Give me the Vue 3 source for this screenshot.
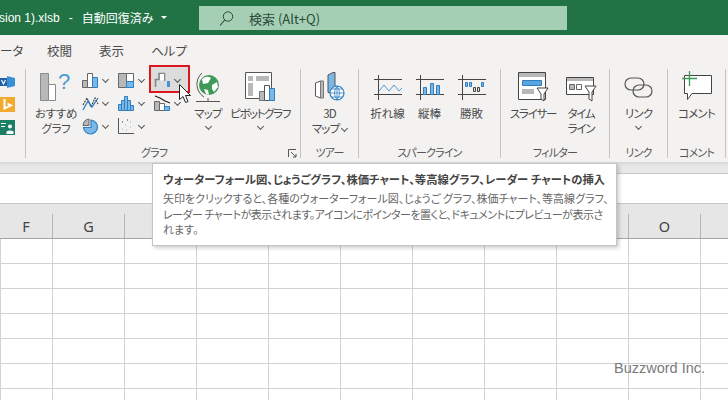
<script setup>
// only the letters that show past the tooltip get a name
const colNames = ['F', 'G', '', '', '', '', '', '', '', 'O', '']
const cols = colNames.map((name, i) => ({ id: i, name, width: i === 0 ? 53 : 72 }))
const rows = Array.from({ length: 7 }, (_, i) => i)

const tipLines = [
  '矢印をクリックすると、各種のウォーターフォール図、じょうご グラフ、株価チャート、等高線グラフ、',
  'レーダー チャートが表示されます。アイコンにポインターを置くと、ドキュメントにプレビューが表示さ',
  'れます。'
]
</script>

<template>
  <div class="app">
    <header class="title-bar">
      <div class="doc-title">sion 1).xlsb<span class="dash">-</span>自動回復済み<i class="caret"></i></div>
      <div class="search">
        <svg class="search-icon" width="15" height="15" viewBox="0 0 15 15">
          <circle cx="9" cy="5.500" r="4.700" fill="none" stroke="#2c4a38" stroke-width="1" />
          <path d="M5.700 9 1 14.500" stroke="#2c4a38" stroke-width="1.100" fill="none" />
        </svg>
        <span>検索 (Alt+Q)</span>
      </div>
    </header>

    <nav class="tabs">
      <span class="tab-cut">ータ</span>
      <span>校閲</span>
      <span>表示</span>
      <span>ヘルプ</span>
    </nav>

    <section class="ribbon">
      <div class="group g-cut">
        <div class="cut-icons">
          <svg width="15" height="14" viewBox="0 0 15 14"><path d="M0 3h8v8H0z" fill="#1e5fa8" /><path d="M7 1l8 2v8l-8 2z" fill="#3c8fd6" /><path d="M1.500 5l2 4 2-4" fill="none" stroke="#fff" stroke-width="1.200" /></svg>
          <svg width="15" height="15" viewBox="0 0 15 15"><path d="M0 0h15v15H0z" fill="#f2ab2e" /><path d="M4.500 2v9.500L11 8.500 7.500 6.500" fill="none" stroke="#fff" stroke-width="2" /></svg>
          <svg width="15" height="15" viewBox="0 0 15 15"><path d="M0 0h15v15H0z" fill="#1a7f64" /><circle cx="10" cy="6.500" r="2" fill="#fff" /><path d="M6.500 14v-2.500q3.500-2 7 0V14zM1 3h5v1H1zM1 6h4v1H1z" fill="#fff" /></svg>
        </div>
      </div>

      <div class="group g-chart">
        <div class="group-body chart-body">
          <div class="big-btn rec">
            <div class="ico">
              <svg width="32" height="29" viewBox="0 0 32 29">
                <path d="M.5 1.500h8v27h-8z" fill="#b8b8b8" stroke="#8a8a8a" />
                <path d="M8.500 12.500h7v16h-7z" fill="#fff" stroke="#8a8a8a" />
                <text x="18" y="17" font-size="22" fill="#4a9bd4" font-family="Liberation Sans">?</text>
              </svg>
            </div>
            <span>おすすめ<br />グラフ</span>
          </div>

          <div class="chart-grid">
            <div class="mini">
              <svg width="17" height="17" viewBox="0 0 17 17"><path d="M.5 8.500h5v7h-5z" fill="#b8b8b8" stroke="#666" /><path d="M5.500 1.500h5v14h-5z" fill="#fff" stroke="#666" /><path d="M10.500 5.500h5v10h-5z" fill="#7ab8e8" stroke="#2f7fc0" /></svg>
              <i class="chev"></i>
            </div>
            <div class="mini">
              <svg width="17" height="17" viewBox="0 0 17 17"><path d="M.5 1.500h8v14h-8z" fill="#b8b8b8" stroke="#666" /><path d="M8.500 1.500h7v8h-7z" fill="#fff" stroke="#666" /><path d="M8.500 9.500h7v6h-7z" fill="#7ab8e8" stroke="#2f7fc0" /></svg>
              <i class="chev"></i>
            </div>
            <div class="mini active">
              <svg width="17" height="17" viewBox="0 0 17 17"><path d="M1.500 15V7.500h3.500V1.500h5.500v7.500" fill="none" stroke="#888" stroke-width="1.600" /><path d="M6 2h4v6.500H6z" fill="#fff" /><path d="M13 9h3v6h-3z" fill="#3f92d6" /></svg>
              <i class="chev"></i>
            </div>
            <div class="mini">
              <svg width="17" height="17" viewBox="0 0 17 17"><path d="M1 10 5 3l4 9 4-9 3 6" fill="none" stroke="#333" stroke-width="1.100" stroke-dasharray="2 1" /><path d="M1 15 6 6l4 6 6-9" fill="none" stroke="#2f7fc0" stroke-width="1.300" /></svg>
              <i class="chev"></i>
            </div>
            <div class="mini">
              <svg width="17" height="17" viewBox="0 0 17 17"><path d="M.5 9.500h3v6h-3zM3.500 5.500h3v10h-3zM6.500 1.500h3v14h-3zM9.500 5.500h3v10h-3zM12.500 10.500h3v5h-3z" fill="#7ab8e8" stroke="#2f7fc0" /></svg>
              <i class="chev"></i>
            </div>
            <div class="mini">
              <svg width="17" height="17" viewBox="0 0 17 17"><path d="M.5 6.500h5v9h-5z" fill="#b8b8b8" stroke="#666" /><path d="M5.500 8.500h5v7h-5z" fill="#fff" stroke="#666" /><path d="M10.500 11.500h5v4h-5z" fill="#7ab8e8" stroke="#2f7fc0" /><path d="M1 1l5 2 5 3 5 2" fill="none" stroke="#222" stroke-width="1.300" /></svg>
              <i class="chev"></i>
            </div>
            <div class="mini">
              <svg width="17" height="17" viewBox="0 0 17 17"><path d="M7 1A7 7 0 0 0 1 7.500h6z" fill="#b8b8b8" stroke="#666" /><path d="M9 2a7 7 0 1 1-7.500 7.500H9z" fill="#7ab8e8" stroke="#2f7fc0" stroke-width="1.200" /></svg>
              <i class="chev"></i>
            </div>
            <div class="mini">
              <svg width="17" height="17" viewBox="0 0 17 17"><path d="M.5 0v15.500H16" fill="none" stroke="#555" /><path d="M4 11h1M7 7h1M8 12h1M12 4h1M12 9h1" stroke="#7ab8e8" /><path d="M4 4h1M9 2h1" stroke="#333" /></svg>
              <i class="chev"></i>
            </div>
          </div>

          <div class="big-btn map">
            <div class="ico">
              <svg width="26" height="31" viewBox="0 0 26 31">
                <circle cx="14" cy="13" r="10" fill="#3f9a58" />
                <path d="M7 7q5-4 9-1l-3 5-5 1zM17 13l5-3 1 5-4 5-2-3zM9 17l4 1 1 5-3-1z" fill="#fff" />
                <path d="M7 1A15 15 0 0 0 9 25M1 29.500h24M13 26v3" fill="none" stroke="#555" />
              </svg>
            </div>
            <span>マップ</span>
            <i class="chev"></i>
          </div>

          <div class="big-btn pivot">
            <div class="ico">
              <svg width="31" height="30" viewBox="0 0 31 30">
                <path d="M.5 .5h26v26H.5z" fill="#fff" stroke="#555" />
                <path d="M3 4h5v5H3zM11 4h13v5H11zM3 11h5v13H3z" fill="#b8b8b8" />
                <path d="M14.500 19.500h5v9h-5z" fill="#b8b8b8" stroke="#777" /><path d="M19.500 13.500h5v15h-5z" fill="#fff" stroke="#555" /><path d="M24.500 16.500h5v12h-5z" fill="#7ab8e8" stroke="#2f7fc0" />
              </svg>
            </div>
            <span>ピボットグラフ</span>
            <i class="chev"></i>
          </div>
        </div>
        <div class="group-label chart-label">グラフ</div>
        <svg class="launcher" width="9" height="9" viewBox="0 0 9 9"><path d="M.5 8V.5H8M3 3l5 5M5 8h3V5" fill="none" stroke="#555" /></svg>
      </div>

      <div class="group g-tour">
        <div class="group-body">
          <div class="big-btn">
            <div class="ico">
              <svg width="30" height="29" viewBox="0 0 30 29">
                <path d="M.5 11l5-2v17l-5-2z" fill="#fff" stroke="#555" /><path d="M5.500 9h3v17h-3z" fill="#b8b8b8" stroke="#777" />
                <path d="M13 3l5-2.500h2v20h-7z" fill="#7ab8e8" stroke="#555" />
                <circle cx="22" cy="21" r="7" fill="#fff" stroke="#2f7fc0" stroke-width="1.200" />
                <path d="M15 21h14M22 14v14M17 17h10M17 25h10M22 14q-5 7 0 14M22 14q5 7 0 14" fill="none" stroke="#2f7fc0" stroke-width=".8" />
              </svg>
            </div>
            <span>3D<br />マップ <i class="chev inline"></i></span>
          </div>
        </div>
        <div class="group-label">ツアー</div>
      </div>

      <div class="group g-spark">
        <div class="group-body spark-body">
          <div class="big-btn spark">
            <div class="ico spark-ico">
              <svg width="28" height="25" viewBox="0 0 28 25"><path d="M0 4.500h28M0 19.500h28M4.500 0v25" stroke="#444" fill="none" /><path d="M5 16l5-6 5 6 5-6 5 6 3-3" stroke="#4a9bd4" fill="none" /></svg>
            </div>
            <span>折れ線</span>
          </div>
          <div class="big-btn spark">
            <div class="ico spark-ico">
              <svg width="28" height="25" viewBox="0 0 28 25"><path d="M0 4.500h28M0 19.500h28M4.500 0v25" stroke="#444" fill="none" /><path d="M7.500 12.500h3v7h-3zM14.500 8.500h3v11h-3zM20.500 10.500h3v9h-3z" fill="#7ab8e8" stroke="#2f7fc0" /></svg>
            </div>
            <span>縦棒</span>
          </div>
          <div class="big-btn spark">
            <div class="ico spark-ico">
              <svg width="28" height="25" viewBox="0 0 28 25"><path d="M0 4.500h28M0 19.500h28M4.500 0v25" stroke="#444" fill="none" /><path d="M7.500 7.500h2v4h-2zM11.500 7.500h2v4h-2zM23.500 7.500h2v4h-2z" fill="#7ab8e8" stroke="#2f7fc0" /><path d="M15.500 12.500h2v4h-2zM19.500 12.500h2v4h-2z" fill="#ddd" stroke="#444" /></svg>
            </div>
            <span>勝敗</span>
          </div>
        </div>
        <div class="group-label">スパークライン</div>
      </div>

      <div class="group g-filter">
        <div class="group-body filter-body">
          <div class="big-btn slicer">
            <div class="ico">
              <svg width="31" height="30" viewBox="0 0 31 30">
                <path d="M.5 .5h27v27H.5z" fill="#fff" stroke="#444" /><path d="M1 1h26v4H1z" fill="#b8b8b8" />
                <path d="M4.500 8.500h19v5h-19z" fill="#5aa5e0" stroke="#2f7fc0" /><path d="M4 17h12v5H4z" fill="#b8b8b8" />
                <path d="M19 16h11l-4 6v7l-3-2v-5z" fill="#fff" stroke="#444" />
              </svg>
            </div>
            <span>スライサー</span>
          </div>
          <div class="big-btn slicer">
            <div class="ico">
              <svg width="31" height="30" viewBox="0 0 31 30">
                <path d="M.5 5.500h27v17H.5z" fill="#fff" stroke="#444" /><path d="M1 6h26v3H1z" fill="#b8b8b8" />
                <path d="M3.500 12.500h5v5h-5z" fill="#b8b8b8" stroke="#666" /><path d="M10.500 12.500h5v5h-5z" fill="#fff" stroke="#666" />
                <path d="M19 14h11l-4 6v9l-3-2v-7z" fill="#fff" stroke="#444" />
              </svg>
            </div>
            <span>タイム<br />ライン</span>
          </div>
        </div>
        <div class="group-label">フィルター</div>
      </div>

      <div class="group g-link">
        <div class="group-body">
          <div class="big-btn">
            <div class="ico link-ico">
              <svg width="29" height="21" viewBox="0 0 29 21">
                <rect x="1" y="1" width="19" height="12" rx="6" fill="none" stroke="#555" stroke-width="1.200" />
                <rect x="9" y="8" width="19" height="12" rx="6" fill="none" stroke="#555" stroke-width="1.200" />
              </svg>
            </div>
            <span>リンク</span>
            <i class="chev"></i>
          </div>
        </div>
        <div class="group-label">リンク</div>
      </div>

      <div class="group g-comment">
        <div class="group-body">
          <div class="big-btn">
            <div class="ico comment-ico">
              <svg width="31" height="29" viewBox="0 0 31 29">
                <path d="M3.500 4.500h27v18H11l-4.500 6v-6h-3z" fill="#fff" stroke="#444" />
                <path d="M8.500 0v15M1 7.500h15" stroke="#3f9a58" stroke-width="1.300" />
              </svg>
            </div>
            <span>コメント</span>
          </div>
        </div>
        <div class="group-label">コメント</div>
      </div>
    </section>

    <div class="ribbon-gap"></div>
    <div class="formula-bar"></div>

    <div class="sheet">
      <div class="col-head">
        <div v-for="c in cols" :key="c.id" class="col-cell" :style="{ width: c.width + 'px' }">{{ c.name }}</div>
      </div>
      <div v-for="r in rows" :key="r" class="row">
        <div v-for="c in cols" :key="c.id" class="cell" :style="{ width: c.width + 'px' }"></div>
      </div>
    </div>

    <div class="tooltip">
      <div class="tip-title">ウォーターフォール図、じょうごグラフ、株価チャート、等高線グラフ、レーダー チャートの挿入</div>
      <div class="tip-body">
        <div v-for="(line, i) in tipLines" :key="line" :class="{ tight: i === 1 }">{{ line }}</div>
      </div>
    </div>

    <svg class="cursor" width="13" height="20" viewBox="0 0 13 20">
      <path d="M.5 .5v15l3.500-3 2.500 6 2.500-1-2.500-6h5z" fill="#fff" stroke="#222" />
    </svg>

    <div class="watermark">Buzzword Inc.</div>
  </div>
</template>

<style>
html, body { margin: 0; padding: 0; background: #fff; }
</style>

<style scoped>
.app {
  position: relative;
  width: 728px;
  height: 400px;
  overflow: hidden;
  background: #fff;
  font-family: "Noto Sans CJK JP", "Liberation Sans", sans-serif;
  font-feature-settings: "palt";
  color: #444;
}
.title-bar {
  height: 35px;
  background: #217346;
  display: flex;
  align-items: center;
  color: #fff;
}
.doc-title {
  width: 199px;
  flex: none;
  display: flex;
  align-items: center;
  font-size: 12px;
  white-space: nowrap;
  overflow: hidden;
  font-family: "Liberation Sans", "Noto Sans CJK JP", sans-serif;
  font-feature-settings: normal;
  margin-left: -1px;
  margin-right: 1px;
}
.dash { margin: 0 9px; }
.caret {
  width: 0;
  height: 0;
  margin-left: 7px;
  border-left: 3px solid transparent;
  border-right: 3px solid transparent;
  border-top: 3px solid #fff;
}
.search {
  width: 368px;
  height: 24px;
  margin-top: 1px;
  background: #a5cfb4;
  display: flex;
  align-items: center;
  color: #2c4a38;
  font-size: 13px;
  gap: 15px;
  padding-left: 20px;
  box-sizing: border-box;
}
.search-icon { flex: none; }
.tabs {
  height: 27px;
  background: #f3f2f1;
  display: flex;
  align-items: center;
  font-size: 12.500px;
  color: #4a4a4a;
  padding-top: 3px;
  box-sizing: border-box;
  gap: 27px;
}
.tab-cut { width: 20px; white-space: nowrap; }
.ribbon {
  height: 100px;
  background: #f3f2f1;
  display: flex;
  box-sizing: border-box;
  padding-top: 7px;
}
.group {
  position: relative;
  display: flex;
  flex-direction: column;
  height: 89px;
  flex: none;
  box-sizing: border-box;
  border-right: 1px solid #c4c4c4;
}
.group-body { flex: 1; display: flex; justify-content: center; }
.group-label {
  height: 12px;
  text-align: center;
  font-size: 11px;
  line-height: 12px;
  letter-spacing: -0.8px;
  color: #555;
  white-space: nowrap;
}
.chart-label { padding-right: 18px; }
.g-cut { width: 26px; }
.g-chart { width: 275px; }
.g-tour { width: 58px; }
.g-spark { width: 142px; }
.g-filter { width: 109px; }
.g-link { width: 58px; }
.g-comment { width: 58px; }
.cut-icons {
  display: flex;
  flex-direction: column;
  gap: 8px;
  padding-top: 6px;
}
.cut-icons svg { display: block; }
.chart-body { justify-content: flex-start; }
.big-btn {
  display: flex;
  flex-direction: column;
  align-items: center;
  font-size: 11.500px;
  line-height: 15px;
  letter-spacing: -0.8px;
  color: #4a4a4a;
  text-align: center;
  white-space: nowrap;
}
.ico {
  height: 37px;
  box-sizing: border-box;
  padding-top: 3px;
}
.ico svg { display: block; overflow: visible; }
.spark-ico { padding-top: 6px; }
.link-ico { padding-top: 8px; }
.comment-ico { padding-top: 2px; }
.rec { width: 54px; padding-left: 6px; box-sizing: border-box; letter-spacing: -0.3px; }
.chart-grid {
  display: grid;
  grid-template-columns: 36px 36px 36px;
  grid-auto-rows: 23px;
  align-content: start;
  width: 108px;
  flex: none;
}
.mini {
  position: relative;
  display: flex;
  align-items: center;
  gap: 4px;
  padding-left: 2px;
  height: 23px;
}
.mini svg, .mini .chev { position: relative; z-index: 1; }
.mini.active::before {
  content: "";
  position: absolute;
  left: -3px;
  top: -4px;
  width: 41px;
  height: 28px;
  box-sizing: border-box;
  background: #dcdcdc;
  border: 2px solid #dd1720;
}
.chev {
  display: inline-block;
  width: 4px;
  height: 4px;
  border-right: 1px solid #555;
  border-bottom: 1px solid #555;
  transform: rotate(45deg);
  margin-top: -2px;
}
.chev.inline { margin-left: 1px; margin-bottom: 2px; }
.big-btn > .chev { margin-top: 3px; }
.map { width: 40px; flex: none; }
.pivot { width: 62px; margin-left: 1px; flex: none; letter-spacing: -1.400px; }
.spark-body { gap: 14px; }
.spark { width: 28px; letter-spacing: 0; }
.filter-body { justify-content: flex-start; padding-left: 8px; }
.slicer { width: 48px; letter-spacing: -1.200px; }
.launcher { position: absolute; right: 3px; bottom: 0; }
.ribbon-gap {
  height: 11px;
  background: linear-gradient(#d8d8d8, #e8e8e8 4px);
}
.formula-bar {
  height: 30px;
  box-sizing: border-box;
  background: #fff;
  border-top: 1px solid #c8c8c8;
}
.col-head {
  display: flex;
  align-items: flex-end;
  height: 36px;
  box-sizing: border-box;
  background: #e6e6e6;
  border-top: 1px solid #c8c8c8;
  border-bottom: 1px solid #a5a5a5;
}
.col-cell {
  flex: none;
  height: 24px;
  box-sizing: border-box;
  border-right: 1px solid #b4b4b4;
  text-align: center;
  font-family: "Noto Sans", "Liberation Sans", sans-serif;
  font-size: 14.500px;
  line-height: 24px;
  color: #444;
}
.row { display: flex; height: 25px; box-sizing: border-box; border-bottom: 1px solid #d2d2d2; }
.cell { flex: none; box-sizing: border-box; border-right: 1px solid #d2d2d2; }
.cell:first-child { border-left: 1px solid #d2d2d2; }
.tooltip {
  position: absolute;
  left: 152px;
  top: 163px;
  width: 465px;
  height: 83px;
  box-sizing: border-box;
  background: #fff;
  border: 1px solid #c4c4c4;
  box-shadow: 2px 2px 4px rgba(0, 0, 0, .2);
  padding: 7px 10px;
}
.tip-title { font-size: 11.300px; font-weight: 700; line-height: 16px; white-space: nowrap; color: #444; }
.tip-body { margin-top: 4px; font-size: 11px; line-height: 15.500px; color: #666; white-space: nowrap; }
.tight { letter-spacing: -0.5px; }
.cursor { position: absolute; left: 179px; top: 84px; }
.watermark {
  position: absolute;
  left: 614px;
  top: 360px;
  font-family: "Liberation Sans", sans-serif;
  font-size: 14.500px;
  color: #7a7a7a;
}
</style>
